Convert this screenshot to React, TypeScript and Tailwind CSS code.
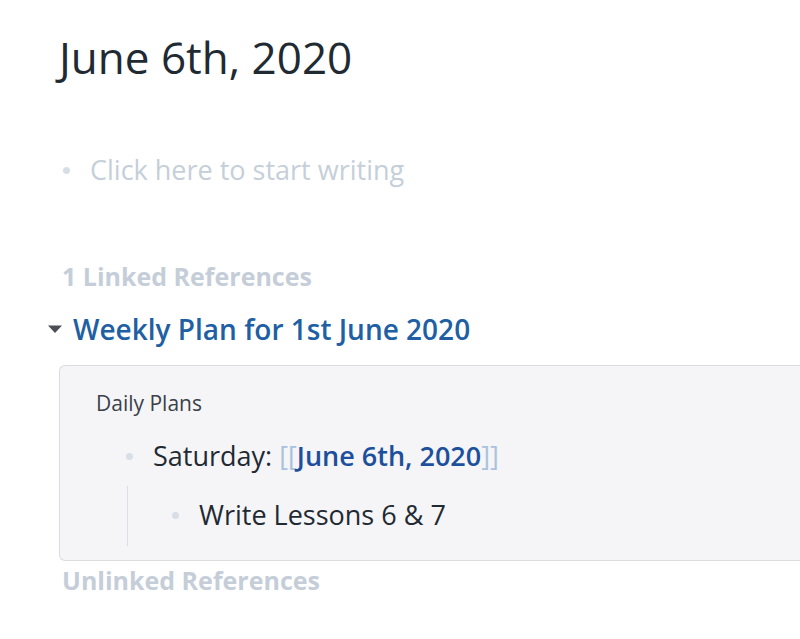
import React from 'react';

const Bullet: React.FC<{ className?: string }> = ({ className = '' }) => (
  <span className={`inline-block h-[7px] w-[7px] shrink-0 rounded-full bg-[#d8dee5] ${className}`} />
);

const App: React.FC = () => {
  return (
    <div className="h-[639px] w-[800px] overflow-hidden bg-white font-['Open_Sans',sans-serif] text-[#202b33]">
      <div className="pl-[59px] pt-[21px]">
        <h1 className="text-[44px] leading-[72px] font-normal text-[#1f2a33]">June 6th, 2020</h1>

        <div className="mt-[59px] flex items-center h-[36px]">
          <Bullet className="ml-[4px] mr-[20px]" />
          <span className="text-[27px] leading-[36px] text-[#c5cfd9]">Click here to start writing</span>
        </div>

        <div className="mt-[71px] ml-[3px] text-[25px] leading-[34px] font-bold text-[#c5ced8]">1 Linked References</div>

        <div className="mt-[17px] flex items-center -ml-[12px] h-[38px]">
          <svg width="16" height="10" viewBox="0 0 16 10" className="mr-[10px]">
            <path d="M1 1.5 L15 1.5 L8 9 Z" fill="#4a4f55" />
          </svg>
          <span className="text-[28px] leading-[38px] font-semibold text-[#215fa4]">Weekly Plan for 1st June 2020</span>
        </div>

        <div className="mt-[17px] rounded-l-[6px] border border-r-0 border-[#dcdcde] bg-[#f5f5f7] pl-[36px] pt-[23px] pb-[14px]">
          <div className="text-[21px] leading-[28px] text-[#3a4148]">Daily Plans</div>
          <div className="mt-[20px] ml-[30px] flex items-center h-[38px]">
            <Bullet className="mr-[20px]" />
            <span className="text-[27px] leading-[38px] text-[#1f2a33]">
              Saturday:{' '}
              <span className="text-[#a9c2de]">[[</span>
              <span className="font-semibold text-[#1c4f9c]">June 6th, 2020</span>
              <span className="text-[#a9c2de]">]]</span>
            </span>
          </div>
          <div className="ml-[31px] flex">
            <div className="w-[1px] bg-[#dedee2] h-[60px] mt-[11px]" />
            <div className="ml-[44px] mt-[22px] flex items-center h-[36px]">
              <Bullet className="mr-[20px]" />
              <span className="text-[27px] leading-[36px] text-[#1f2a33]">Write Lessons 6 &amp; 7</span>
            </div>
          </div>
        </div>

        <div className="mt-[3px] ml-[3px] text-[25px] leading-[32px] font-bold text-[#c5ced8]">Unlinked References</div>
      </div>
    </div>
  );
};

export default App;
